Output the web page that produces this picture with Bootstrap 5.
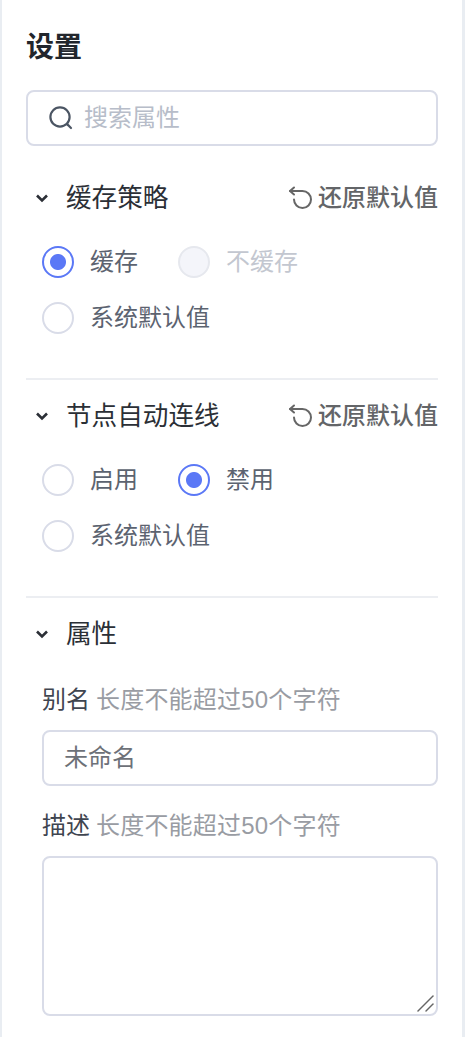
<!DOCTYPE html>
<html lang="zh">
<head>
<meta charset="utf-8">
<title>设置</title>
<link href="https://cdn.jsdelivr.net/npm/bootstrap@5.3.0/dist/css/bootstrap.min.css" rel="stylesheet">
<style>
html,body{height:100%;overflow:hidden;background:#fff}
body{font-family:"Liberation Sans","Noto Sans CJK SC",sans-serif;width:467px}
.pane{width:465px;height:1037px;border-left:2px solid #e9edf2;border-right:3px solid #e9edf2;padding:28px 24px 0 24px;overflow:hidden}
.pane-title{font-size:28px;font-weight:700;line-height:40px;color:#22262c;margin:0 0 22px}
.searchbox{height:56px;border:2px solid #d9dce8;border-radius:8px;padding-left:20px;gap:10px;margin-bottom:32px}
.searchbox input{border:0;outline:0;flex:1;min-width:0;font-size:24px;line-height:32px;padding:0;color:#333;background:transparent}
.searchbox input::placeholder{color:#b7bdc9;opacity:1}
.sec-head{height:40px;font-size:25.6px;color:#2b2f36}
.sec-caret{width:16px;height:16px;margin:0 16px 0 8px;flex:none}
.reset{font-size:24px;font-weight:500;color:#636568;gap:6px;line-height:32px}
.opts{padding:28px 0 0 16px;gap:24px}
.opt-row{column-gap:40px}
.opt{font-size:24px;line-height:32px;color:#5c6370;gap:16px;height:32px}
.opt input{appearance:none;width:32px;height:32px;border:2px solid #d9dce8;border-radius:50%;margin:0;background:#fff;flex:none}
.opt input:checked{border-color:#5b78f6;background:radial-gradient(circle,#5b78f6 0,#5b78f6 7.5px,#fff 8.5px)}
.opt input:disabled{background:#f4f5fa;border-color:#e6e8ee}
.opt.off{color:#c3c7d0}
.sep{border:0;border-top:2px solid #eceef2;opacity:1;margin:0}
.sec-one{padding-bottom:44px}
.sec-two{padding:16px 0 44px}
.sec-three{padding-top:16px}
.fld{padding:30px 0 0 16px}
.fld-label{font-size:24px;line-height:32px;color:#3f4550;margin:0;display:block}
.fld-hint{color:#999ca3;margin-left:6px;letter-spacing:.2px}
.fld-input,.fld-area{display:block;width:100%;border:2px solid #d9dce8;border-radius:8px;font-size:24px;color:#333;padding:0 20px;outline:0;box-shadow:none}
.fld-input{height:56px;margin:14px 0 24px}
.fld-input::placeholder{color:#6d7178;opacity:1}
.area-wrap{margin-top:14px}
.fld-area{height:160px;resize:none}
.grip{position:absolute;right:3px;bottom:3px;width:18px;height:18px;pointer-events:none}
</style>
</head>
<body>
<div class="pane">
  <h1 class="pane-title">设置</h1>
  <div class="searchbox d-flex align-items-center">
    <svg width="26" height="26" viewBox="0 0 26 26" fill="none" stroke="#4b5563" stroke-width="2.2" stroke-linecap="round"><circle cx="12" cy="12" r="9.6"/><path d="M19.4 19.4l3.6 3.6"/></svg>
    <input type="text" placeholder="搜索属性">
  </div>

  <section class="sec-one">
    <div class="sec-head d-flex align-items-center justify-content-between">
      <div class="d-flex align-items-center"><svg class="sec-caret" viewBox="0 0 16 16" fill="none" stroke="#2b2f36" stroke-width="2.6"><path d="M3 5.500l5 5 5-5"/></svg><span>缓存策略</span></div>
      <div class="reset d-flex align-items-center"><svg width="24" height="24" viewBox="0 0 24 24" fill="none" stroke="#666" stroke-width="2" stroke-linecap="round" stroke-linejoin="round"><path d="M6 1.500 2 5l4 3.500"/><path d="M2 5H14.500A8.500 8.500 0 1 1 6 13.500"/></svg><span>还原默认值</span></div>
    </div>
    <div class="opts d-flex flex-column">
      <div class="opt-row d-flex">
        <label class="opt d-flex align-items-center"><input type="radio" name="a" checked>缓存</label>
        <label class="opt off d-flex align-items-center"><input type="radio" name="a" disabled>不缓存</label>
      </div>
      <div class="opt-row d-flex">
        <label class="opt d-flex align-items-center"><input type="radio" name="a">系统默认值</label>
      </div>
    </div>
  </section>
  <hr class="sep">

  <section class="sec-two">
    <div class="sec-head d-flex align-items-center justify-content-between">
      <div class="d-flex align-items-center"><svg class="sec-caret" viewBox="0 0 16 16" fill="none" stroke="#2b2f36" stroke-width="2.6"><path d="M3 5.500l5 5 5-5"/></svg><span>节点自动连线</span></div>
      <div class="reset d-flex align-items-center"><svg width="24" height="24" viewBox="0 0 24 24" fill="none" stroke="#666" stroke-width="2" stroke-linecap="round" stroke-linejoin="round"><path d="M6 1.500 2 5l4 3.500"/><path d="M2 5H14.500A8.500 8.500 0 1 1 6 13.500"/></svg><span>还原默认值</span></div>
    </div>
    <div class="opts d-flex flex-column">
      <div class="opt-row d-flex">
        <label class="opt d-flex align-items-center"><input type="radio" name="b">启用</label>
        <label class="opt d-flex align-items-center"><input type="radio" name="b" checked>禁用</label>
      </div>
      <div class="opt-row d-flex">
        <label class="opt d-flex align-items-center"><input type="radio" name="b">系统默认值</label>
      </div>
    </div>
  </section>
  <hr class="sep">

  <section class="sec-three">
    <div class="sec-head d-flex align-items-center">
      <svg class="sec-caret" viewBox="0 0 16 16" fill="none" stroke="#2b2f36" stroke-width="2.6"><path d="M3 5.500l5 5 5-5"/></svg><span>属性</span>
    </div>
    <div class="fld">
      <label class="fld-label">别名<span class="fld-hint">长度不能超过50个字符</span></label>
      <input class="fld-input" type="text" placeholder="未命名">
      <label class="fld-label">描述<span class="fld-hint">长度不能超过50个字符</span></label>
      <div class="area-wrap position-relative">
        <textarea class="fld-area"></textarea>
        <svg class="grip" viewBox="0 0 18 18" fill="none" stroke="#666" stroke-width="1.500" stroke-linecap="round"><path d="M1 16 16 1"/><path d="M9 16l7-7"/></svg>
      </div>
    </div>
  </section>
</div>
<script src="https://cdn.jsdelivr.net/npm/bootstrap@5.3.0/dist/js/bootstrap.bundle.min.js"></script>
</body>
</html>
